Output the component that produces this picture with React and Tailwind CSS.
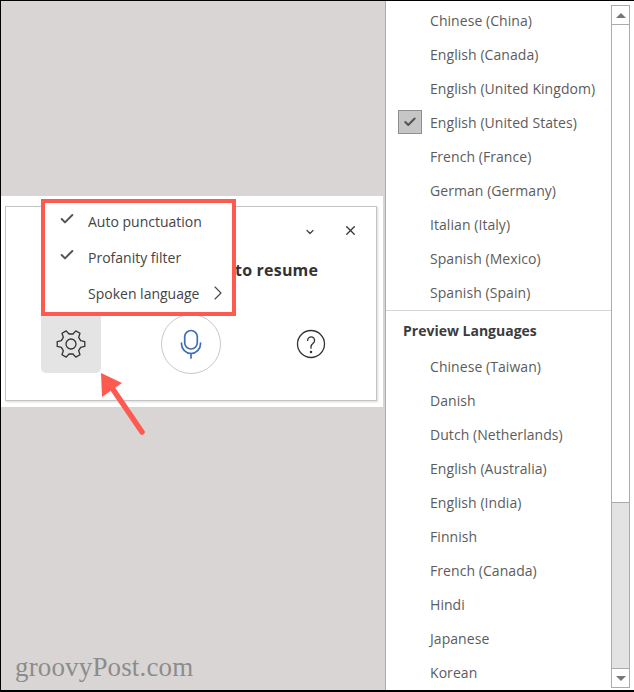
import { Check, ChevronDown, ChevronRight, X } from 'lucide-react'

const mainLanguages = [
  'Chinese (China)',
  'English (Canada)',
  'English (United Kingdom)',
  'English (United States)',
  'French (France)',
  'German (Germany)',
  'Italian (Italy)',
  'Spanish (Mexico)',
  'Spanish (Spain)',
]

const previewLanguages = [
  'Chinese (Taiwan)',
  'Danish',
  'Dutch (Netherlands)',
  'English (Australia)',
  'English (India)',
  'Finnish',
  'French (Canada)',
  'Hindi',
  'Japanese',
  'Korean',
]

// six-tooth gear outline, centre 17,17
const polar = (r, deg) => {
  const a = (deg * Math.PI) / 180
  return `${(17 + r * Math.cos(a)).toFixed(2)} ${(17 + r * Math.sin(a)).toFixed(2)}`
}
const gearPoints = [0, 60, 120, 180, 240, 300]
  .flatMap((d) => [polar(10.2, d - 19), polar(14, d - 10), polar(14, d + 10), polar(10.2, d + 19)])
  .join(' L ')

function GearIcon() {
  return (
    <svg width="34" height="34" viewBox="0 0 34 34" fill="none" stroke="#333333" strokeWidth="1.3" strokeLinejoin="round">
      <path d={`M ${gearPoints} Z`} />
      <circle cx="17" cy="17" r="5" />
    </svg>
  )
}

function MicIcon() {
  return (
    <svg width="34" height="34" viewBox="0 0 34 34" fill="none" stroke="#3f6fb5" strokeWidth="1.7" strokeLinecap="round">
      <rect x="10.7" y="3.5" width="12.6" height="18.5" rx="6.3" />
      <path d="M7.5 16v1a9.5 9.5 0 0 0 19 0v-1" />
      <path d="M17 26.5V31" />
    </svg>
  )
}

function HelpIcon() {
  return (
    <svg width="34" height="34" viewBox="0 0 34 34" fill="none" stroke="#333333" strokeWidth="1.3" strokeLinecap="round">
      <circle cx="17" cy="17" r="13.5" />
      <path d="M13.6 13.4a3.5 3.5 0 1 1 5.8 2.6c-1.5 1.2-2.4 1.9-2.4 3.8v1.4" />
      <circle cx="17" cy="25" r="0.6" fill="#333333" />
    </svg>
  )
}

function LanguageRow({ label, selected }) {
  return (
    <div className="relative flex h-[34px] items-center pl-[44px] text-[14px] tracking-[0.06px] text-[#5c5c5c]">
      {selected && (
        <span className="absolute left-[12px] top-[5px] flex h-6 w-6 items-center justify-center border border-[#8f8f8f] bg-[#c6c6c6]">
          <Check size={14} strokeWidth={3.5} color="#555555" />
        </span>
      )}
      {label}
    </div>
  )
}

function MenuRow({ label, checked, more }) {
  return (
    <div className="flex h-[36px] items-center text-[14px] text-[#444444]">
      <span className="-mt-[5px] flex w-[43px] justify-center pl-[1px]">
        {checked && <Check size={16} strokeWidth={3} color="#555555" />}
      </span>
      <span>{label}</span>
      {more && <ChevronRight size={24} strokeWidth={1.1} color="#444444" className="ml-[7px]" />}
    </div>
  )
}

export default function App() {
  return (
    <div className="flex h-[692px] w-[634px] overflow-hidden border-t border-b-2 border-l border-black bg-white font-['Open_Sans',sans-serif]">
      {/* Left: dictation toolbar on the grey page */}
      <div className="flex w-[384px] shrink-0 flex-col bg-[#d9d5d5]">
        <div className="mt-[195px] mr-[2px] h-[211px] bg-white px-[4px] py-[10px]">
          <div className="relative h-[195px] w-[372px] border border-[#c4c4c4] shadow-[1px_1px_2px_rgba(0,0,0,0.15)]">
            <div className="flex h-[32px] items-end justify-end gap-[27px] pr-[18px] pb-[1px]">
              <ChevronDown size={12} strokeWidth={2.5} color="#444444" />
              <X size={15} strokeWidth={2} color="#333333" />
            </div>
            <div className="mt-[20px] pl-[229px] text-[16px] font-bold leading-[22px] tracking-[0.2px] text-[#333333]">to resume</div>
            <div className="mt-[33px] flex items-start pl-[35px]">
              <div className="flex h-[59px] w-[60px] items-center justify-center rounded-b-[5px] bg-[#e4e4e4]">
                <GearIcon />
              </div>
              <div className="ml-[60px] flex h-[60px] w-[60px] items-center justify-center rounded-full border border-[#c8c8c8]">
                <MicIcon />
              </div>
              <div className="ml-[73px] mt-[13px]">
                <HelpIcon />
              </div>
            </div>

            {/* Settings menu with the red highlight */}
            <div className="absolute left-[35px] top-[-8px] h-[117px] w-[195px] border-[4px] border-[#ff5a4f] bg-white">
              <MenuRow label="Auto punctuation" checked />
              <MenuRow label="Profanity filter" checked />
              <MenuRow label="Spoken language" more />
            </div>

            {/* Red arrow pointing at the gear */}
            <svg className="absolute left-[90px] top-[165px]" width="60" height="70" viewBox="0 0 60 70">
              <path d="M46 60 L14 13" stroke="#ff5a4f" strokeWidth="5.5" strokeLinecap="round" fill="none" />
              <path d="M5 1 L26 11 L6 25 Z" fill="#ff5a4f" />
            </svg>
          </div>
        </div>
        <div className="mt-auto pb-[7px] pl-[14px] font-['Liberation_Serif',serif] text-[27px] leading-[32px] tracking-[0.15px] text-[#8c8c8c]">
          groovyPost.com
        </div>
      </div>

      {/* Right: spoken language list with scrollbar */}
      <div className="flex min-w-0 flex-1 border-l border-[#ababab] bg-white">
        <div className="w-[225px] shrink-0 pt-[2px]">
          {mainLanguages.map((lang) => (
            <LanguageRow key={lang} label={lang} selected={lang === 'English (United States)'} />
          ))}
          <div className="mt-[1px] h-px bg-[#d6d6d6]" />
          <div className="flex h-[38px] items-center pl-[17px] text-[14px] font-bold text-[#3c3c3c]">Preview Languages</div>
          {previewLanguages.map((lang) => (
            <LanguageRow key={lang} label={lang} />
          ))}
        </div>
        <div className="mt-[4px] mb-[2px] flex h-[683px] w-[19px] shrink-0 flex-col border-x border-[#ababab]">
          <div className="-mx-px flex h-[20px] items-center justify-center border border-[#ababab]">
            <span className="h-0 w-0 border-x-[5px] border-b-[5px] border-x-transparent border-b-[#777777]" />
          </div>
          <div className="h-[477px] bg-white" />
          <div className="-mx-px h-px bg-[#ababab]" />
          <div className="flex-1 bg-[#e3e3e3]" />
          <div className="-mx-px flex h-[20px] items-center justify-center border border-[#ababab]">
            <span className="h-0 w-0 border-x-[5px] border-t-[5px] border-x-transparent border-t-[#777777]" />
          </div>
        </div>
      </div>
    </div>
  )
}
